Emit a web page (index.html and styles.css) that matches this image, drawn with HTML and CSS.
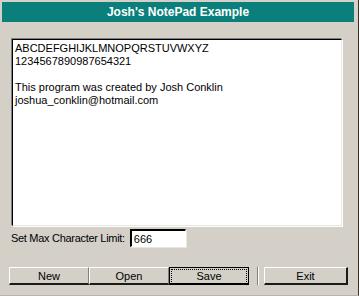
FILE: index.html
```html
<!DOCTYPE html>
<html lang="en">
<head>
  <meta charset="UTF-8" />
  <title>Josh's NotePad Example</title>
  <link rel="stylesheet" href="styles.css">
</head>
<body>
  <div class="window">
    <div class="title-bar">Josh's NotePad Example</div>

    <div class="editor-row">
      <div class="editor">ABCDEFGHIJKLMNOPQRSTUVWXYZ
1234567890987654321

This program was created by Josh Conklin
joshua_conklin@hotmail.com</div>
    </div>

    <div class="limit-row">
      <span class="limit-label">Set Max Character Limit:</span>
      <div class="limit-input">666</div>
    </div>

    <div class="button-row">
      <button class="btn">New</button>
      <button class="btn">Open</button>
      <button class="btn btn-default"><span class="focus">Save</span></button>
      <div class="sep"></div>
      <button class="btn btn-exit">Exit</button>
    </div>
  </div>
</body>
</html>
```

FILE: styles.css
```css
body {
  margin: 0;
  background-color: #d4d0c8;
  font-family: 'Liberation Sans', Arial, sans-serif;
  font-size: 11px;
  color: #000;
}

.window {
  width: 359px;
  height: 296px;
  box-sizing: border-box;
  padding: 2px 4px 0 2px;
  border-right: 1px solid #3a2f24;
  border-bottom: 1px solid #b8b4ac;
  background-color: #d4d0c8;
}

.title-bar {
  height: 20px;
  line-height: 20px;
  width: 352px;
  background-color: #0b7f7b;
  color: #fff;
  font-weight: bold;
  font-size: 12px;
  text-align: center;
}

/* main text box */
.editor-row {
  display: flex;
  padding: 17px 0 0 10px;
}

.editor {
  width: 330px;
  height: 187px;
  box-sizing: border-box;
  background-color: #fff;
  border-top: 1px solid #000;
  border-left: 1px solid #000;
  border-right: 1px solid #e8e6e0;
  border-bottom: 1px solid #e8e6e0;
  padding: 2px 2px;
  white-space: pre;
  line-height: 13px;
  box-shadow: 1px 1px 0 #fff, -1px -1px 0 #808080;
}

.limit-row {
  display: flex;
  align-items: center;
  gap: 5px;
  padding: 3px 0 0 9px;
}

.limit-label {
  font-size: 11px;
  letter-spacing: -0.3px;
}

.limit-input {
  width: 56px;
  height: 18px;
  box-sizing: border-box;
  background-color: #fff;
  border-top: 2px solid #000;
  border-left: 2px solid #000;
  border-right: 1px solid #fff;
  border-bottom: 1px solid #fff;
  padding: 1px 2px;
  line-height: 14px;
  box-shadow: 1px 1px 0 #e8e6e0;
}

.button-row {
  display: flex;
  align-items: center;
  padding: 20px 0 0 7px;
}

.btn {
  width: 80px;
  height: 18px;
  padding: 0;
  box-sizing: border-box;
  font-family: inherit;
  font-size: 11px;
  color: #000;
  background-color: #d4d0c8;
  border-top: 1px solid #fff;
  border-left: 1px solid #fff;
  border-right: 1px solid #808080;
  border-bottom: 2px solid #1a1a1a;
}

.btn-default {
  border: 1px solid #000;
  border-bottom-width: 2px;
  padding: 1px;
}

.focus {
  display: block;
  height: 13px;
  line-height: 13px;
  border: 1px dotted #000;
}

.sep {
  width: 2px;
  height: 18px;
  margin: 0 5px 0 8px;
  border-left: 1px solid #808080;
  border-right: 1px solid #fff;
  box-sizing: border-box;
}

.btn-exit {
  width: 84px;
  border-right: 2px solid #1a1a1a;
}
```
